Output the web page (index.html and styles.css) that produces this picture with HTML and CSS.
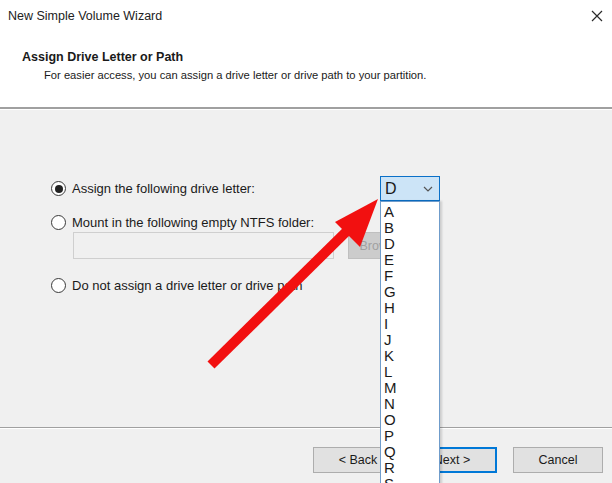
FILE: index.html
```html
<!DOCTYPE html>
<html lang="en">
<head>
    <meta charset="UTF-8">
    <meta name="viewport" content="width=device-width, initial-scale=1.0">
    <title>New Simple Volume Wizard</title>
    <link rel="stylesheet" href="styles.css">
</head>
<body>
    <div class="window">
        <div class="header">
            <div class="titlebar">
                <span class="title">New Simple Volume Wizard</span>
                <svg class="close" width="12" height="12" viewBox="0 0 12 12">
                    <path d="M1 1 L11 11 M11 1 L1 11" stroke="#2b2b2b" stroke-width="1.2" fill="none"/>
                </svg>
            </div>
            <div class="page-head">
                <div class="page-title">Assign Drive Letter or Path</div>
                <div class="page-sub">For easier access, you can assign a drive letter or drive path to your partition.</div>
            </div>
        </div>

        <div class="content">
            <div class="option option-letter">
                <label class="radio"><span class="dot checked"></span>Assign the following drive letter:</label>
                <div class="combo">
                    <span class="combo-value">D</span>
                    <svg class="chevron" width="10" height="6" viewBox="0 0 10 6">
                        <path d="M1 1 L5 5 L9 1" stroke="#555" stroke-width="1.2" fill="none"/>
                    </svg>
                    <ul class="droplist">
                        <li>A</li><li>B</li><li>D</li><li>E</li><li>F</li><li>G</li>
                        <li>H</li><li>I</li><li>J</li><li>K</li><li>L</li><li>M</li>
                        <li>N</li><li>O</li><li>P</li><li>Q</li><li>R</li><li>S</li>
                    </ul>
                </div>
            </div>
            <div class="option option-mount">
                <label class="radio"><span class="dot"></span>Mount in the following empty NTFS folder:</label>
            </div>
            <div class="folder-row">
                <div class="field"></div>
                <button class="btn btn-disabled">Browse...</button>
            </div>
            <div class="option option-none">
                <label class="radio"><span class="dot"></span>Do not assign a drive letter or drive path</label>
            </div>
        </div>

        <div class="footer">
            <button class="btn">&lt; Back</button>
            <button class="btn btn-default">Next &gt;</button>
            <button class="btn btn-cancel">Cancel</button>
        </div>

        <!-- annotation arrow pointing at the drive letter box -->
        <svg class="arrow" width="612" height="483" viewBox="0 0 612 483">
            <line x1="211" y1="365" x2="352" y2="226" stroke="#f21010" stroke-width="10"/>
            <polygon points="378,199 335,222 360,247" fill="#f21010"/>
        </svg>
    </div>
</body>
</html>
```

FILE: styles.css
```css
* { margin: 0; padding: 0; box-sizing: border-box; }
body {
    margin: 0;
    background: #f0f0f0;
    font-family: "Liberation Sans", Arial, sans-serif;
    color: #1a1a1a;
}
.window {
    position: relative;
    width: 612px;
    height: 483px;
    overflow: hidden;
    background: #f0f0f0;
}
.header {
    background: #ffffff;
    height: 110px;
    border-bottom: 1px solid #ffffff;
    box-shadow: inset 0 -2px 0 #a0a0a0, inset 0 -1px 0 #ffffff;
}
.titlebar {
    height: 32px;
    display: flex;
    align-items: center;
    justify-content: space-between;
    padding: 0 9px 0 8px;
}
.title {
    font-size: 12.5px;
    color: #222;
}
.page-head {
    padding: 17px 0 0 22px;
}
.page-title {
    font-weight: bold;
    font-size: 12.5px;
    line-height: 16px;
}
.page-sub {
    font-size: 11.2px;
    line-height: 16px;
    margin: 2px 0 0 22px;
}
.content {
    height: 317px;
    padding: 66px 0 0 51px;
}
.option {
    display: flex;
    align-items: center;
}
.option-letter { height: 25px; }
.option-mount { height: 18px; margin-top: 12px; }
.option-none { height: 18px; margin-top: 17px; }
.radio {
    display: flex;
    align-items: center;
    gap: 6px;
    width: 329px;
    font-size: 13px;
}
.dot {
    width: 15px;
    height: 15px;
    border: 1px solid #3a3a3a;
    border-radius: 50%;
    background: #fff;
    display: flex;
    align-items: center;
    justify-content: center;
    flex: none;
}
.dot.checked::after {
    content: "";
    width: 8px;
    height: 8px;
    border-radius: 50%;
    background: #222;
}
.combo {
    position: relative;
    width: 60px;
    height: 25px;
    border: 1px solid #0a70c8;
    background: #cce4f7;
    display: flex;
    align-items: center;
    justify-content: space-between;
    padding: 0 6px 0 4px;
}
.combo-value { font-size: 16px; }
.droplist {
    position: absolute;
    top: 24px;
    left: -1px;
    width: 60px;
    height: 320px;
    list-style: none;
    background: #fff;
    border: 1px solid #6f9ccb;
    box-shadow: 2px 0 2px rgba(0, 0, 0, 0.15);
    padding: 2px 0 0 3px;
    z-index: 2;
}
.droplist li {
    font-size: 15px;
    line-height: 16px;
    height: 16px;
}
.folder-row {
    display: flex;
    align-items: center;
    gap: 14px;
    margin: 1px 0 0 22px;
}
.field {
    width: 261px;
    height: 27px;
    border: 1px solid #cfcfcf;
    background: #f0f0f0;
}
.btn {
    height: 26px;
    width: 90px;
    font-family: "Liberation Sans", Arial, sans-serif;
    font-size: 12.5px;
    color: #1a1a1a;
    background: #e1e1e1;
    border: 1px solid #adadad;
}
.btn-disabled {
    width: 75px;
    height: 27px;
    background: #cccccc;
    border-color: #bfbfbf;
    color: #a0a0a0;
}
.btn-default {
    border: 2px solid #0078d7;
}
.footer {
    height: 56px;
    border-top: 1px solid #a0a0a0;
    box-shadow: inset 0 1px 0 #ffffff;
    display: flex;
    justify-content: flex-end;
    gap: 4px;
    padding: 19px 9px 0 0;
}
.btn-cancel { margin-left: 12px; }
.arrow {
    position: absolute;
    top: 0;
    left: 0;
    z-index: 3;
    pointer-events: none;
}
```
